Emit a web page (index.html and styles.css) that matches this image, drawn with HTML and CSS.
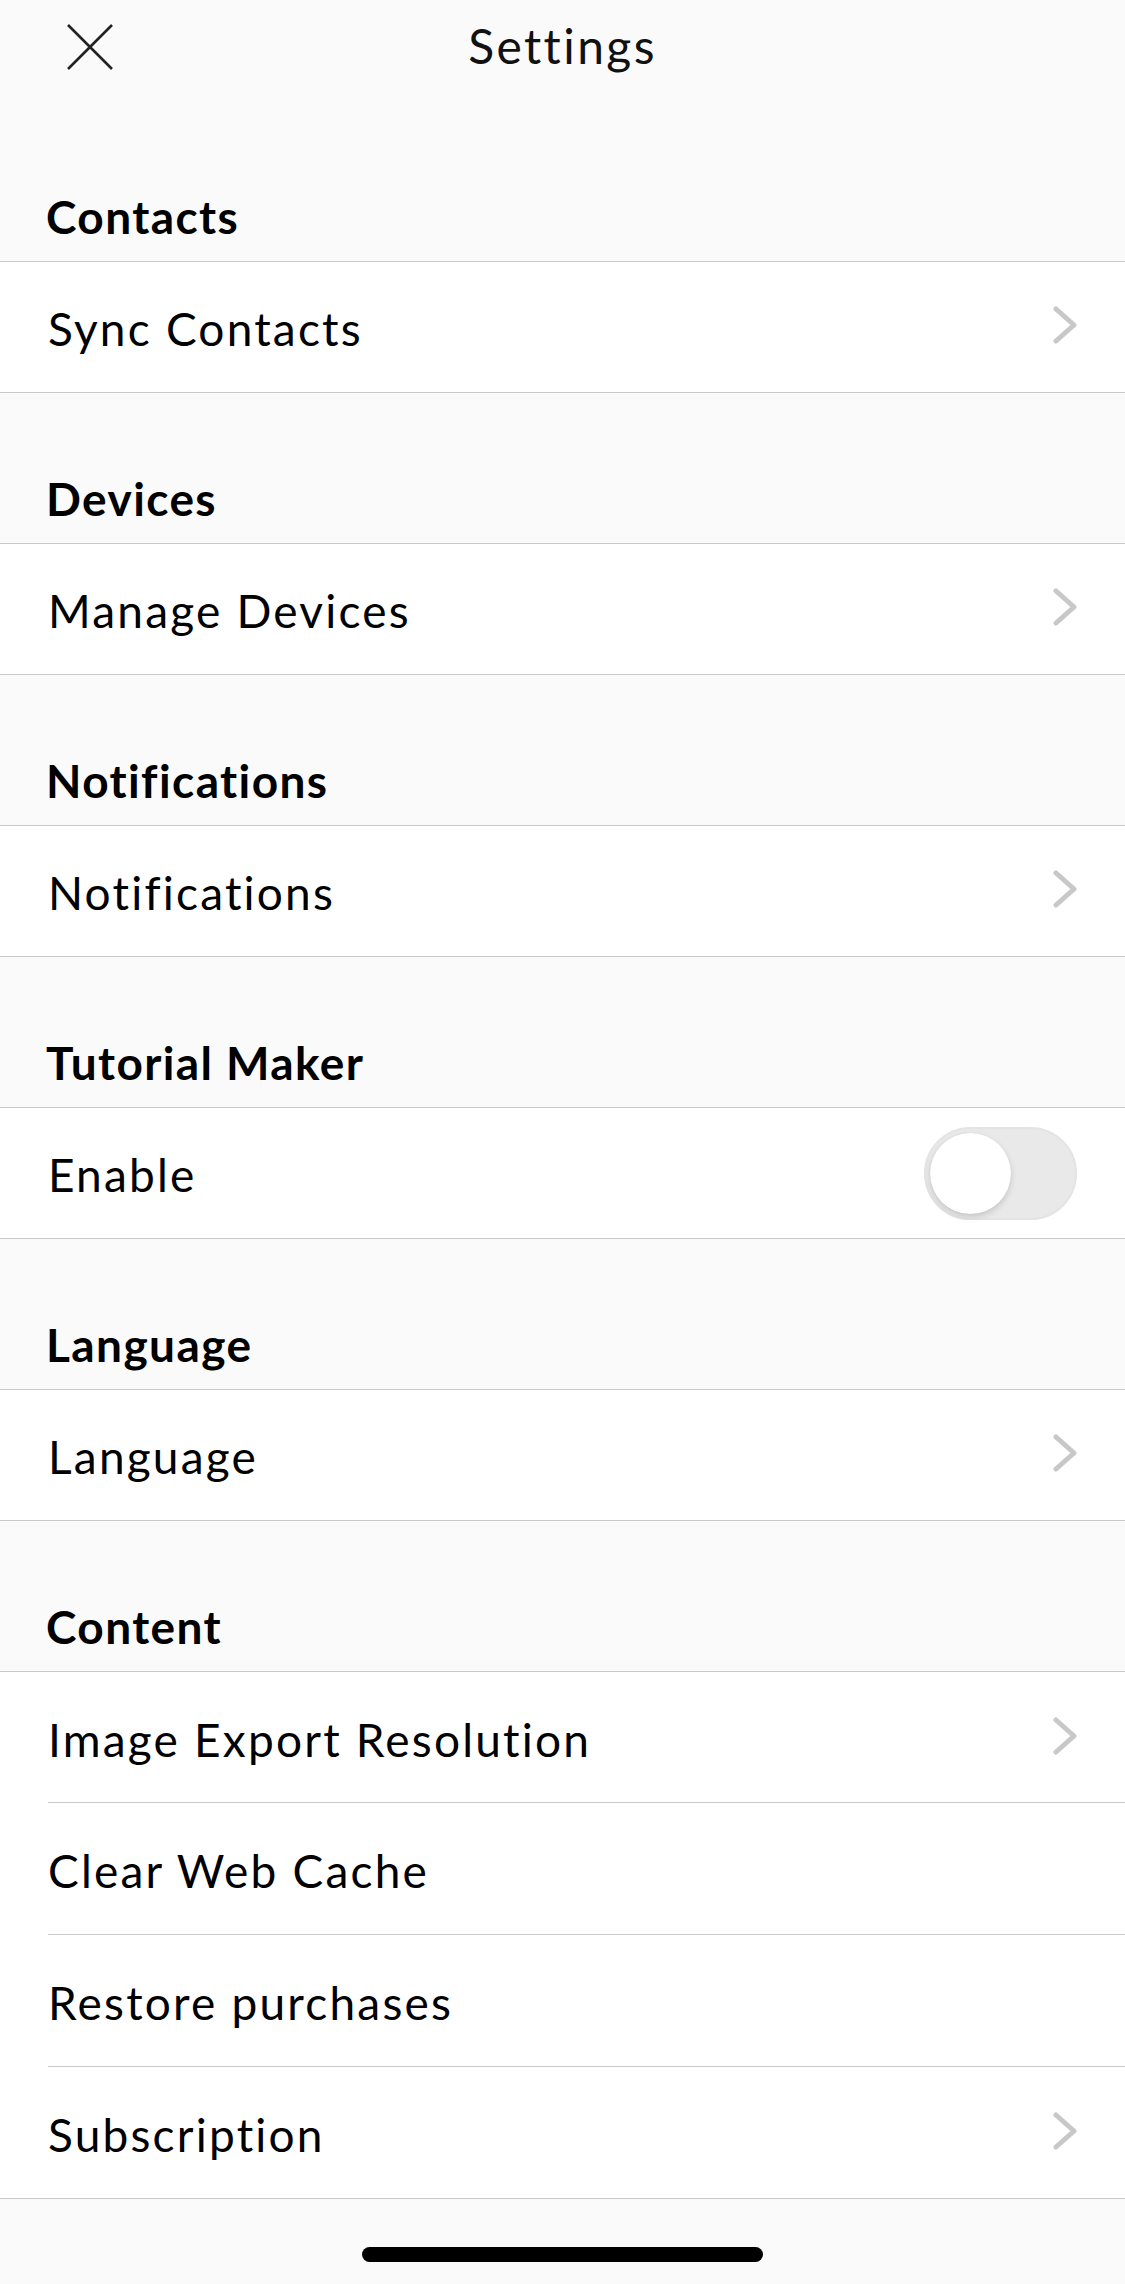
FILE: index.html
```html
<!DOCTYPE html>
<html lang="en">
<head>
    <meta charset="UTF-8">
    <meta name="viewport" content="width=device-width, initial-scale=1.0">
    <title>Settings</title>
    <link rel="stylesheet" href="styles.css">
</head>
<body>
    <header class="nav">
        <button class="close" aria-label="Close">
            <svg width="48" height="48" viewBox="0 0 48 48">
                <path d="M2 2 L46 46 M46 2 L2 46" stroke="#222" stroke-width="2.6" fill="none"/>
            </svg>
        </button>
        <h1>Settings</h1>
    </header>

    <section class="group">
        <h2>Contacts</h2>
        <div class="row">Sync Contacts <svg class="chevron" width="24" height="38" viewBox="0 0 24 38"><path d="M3 3 L21 19 L3 35"/></svg></div>
    </section>

    <section class="group">
        <h2>Devices</h2>
        <div class="row">Manage Devices <svg class="chevron" width="24" height="38" viewBox="0 0 24 38"><path d="M3 3 L21 19 L3 35"/></svg></div>
    </section>

    <section class="group">
        <h2>Notifications</h2>
        <div class="row">Notifications <svg class="chevron" width="24" height="38" viewBox="0 0 24 38"><path d="M3 3 L21 19 L3 35"/></svg></div>
    </section>

    <section class="group">
        <h2>Tutorial Maker</h2>
        <div class="row">Enable <span class="switch"><span class="knob"></span></span></div>
    </section>

    <section class="group">
        <h2>Language</h2>
        <div class="row">Language <svg class="chevron" width="24" height="38" viewBox="0 0 24 38"><path d="M3 3 L21 19 L3 35"/></svg></div>
    </section>

    <section class="group">
        <h2>Content</h2>
        <div class="row inset">Image Export Resolution <svg class="chevron" width="24" height="38" viewBox="0 0 24 38"><path d="M3 3 L21 19 L3 35"/></svg></div>
        <div class="row inset">Clear Web Cache</div>
        <div class="row inset">Restore purchases</div>
        <div class="row">Subscription <svg class="chevron" width="24" height="38" viewBox="0 0 24 38"><path d="M3 3 L21 19 L3 35"/></svg></div>
    </section>

    <footer class="home">
        <span class="home-bar"></span>
    </footer>
</body>
</html>
```

FILE: styles.css
```css
body {
    margin: 0;
    font-family: Lato, "Noto Sans", sans-serif;
    background-color: #fafafa;
    color: #000000;
}
.nav {
    position: relative;
    height: 111px;
    display: flex;
    justify-content: center;
}
.nav h1 {
    margin: 0;
    padding-top: 22px;
    font-size: 48px;
    font-weight: 400;
    letter-spacing: 2.4px;
    line-height: 1;
    color: #111;
}
.close {
    position: absolute;
    left: 66px;
    top: 23px;
    padding: 0;
    border: none;
    background: none;
    width: 48px;
    height: 48px;
}
.group h2 {
    margin: 0;
    height: 151px;
    box-sizing: border-box;
    display: flex;
    align-items: flex-end;
    padding: 0 0 21px 46px;
    font-size: 46px;
    font-weight: 700;
    letter-spacing: 1.4px;
    line-height: 1;
    border-bottom: 1px solid #c8c8c8;
}
.row {
    height: 131px;
    box-sizing: border-box;
    display: flex;
    align-items: center;
    justify-content: space-between;
    padding: 4px 48px 0 48px;
    background-color: #ffffff;
    font-size: 46px;
    letter-spacing: 2.2px;
    line-height: 1;
    border-bottom: 1px solid #c8c8c8;
}
.row + .row {
    height: 132px;
}
.row.inset {
    border-bottom: none;
    background-image: linear-gradient(#c8c8c8, #c8c8c8);
    background-size: calc(100% - 48px) 1px;
    background-position: right bottom;
    background-repeat: no-repeat;
}
.chevron {
    margin-top: -8px;
    fill: none;
    stroke: #c8c8c8;
    stroke-width: 5;
    stroke-linecap: round;
    stroke-linejoin: round;
}
.switch {
    width: 153px;
    height: 93px;
    box-sizing: border-box;
    border-radius: 47px;
    background-color: #e9e9ea;
    border: 2px solid #e4e4e4;
    padding: 4px;
    margin-top: -4px;
    display: flex;
    align-items: center;
}
.knob {
    width: 81px;
    height: 81px;
    border-radius: 50%;
    background-color: #ffffff;
    box-shadow: 0 3px 6px rgba(0, 0, 0, 0.15), 0 0 1px rgba(0, 0, 0, 0.1);
}
.home {
    height: 83px;
    display: flex;
    justify-content: center;
    padding-top: 48px;
    box-sizing: border-box;
}
.home-bar {
    width: 401px;
    height: 15px;
    border-radius: 8px;
    background-color: #000000;
}
```
